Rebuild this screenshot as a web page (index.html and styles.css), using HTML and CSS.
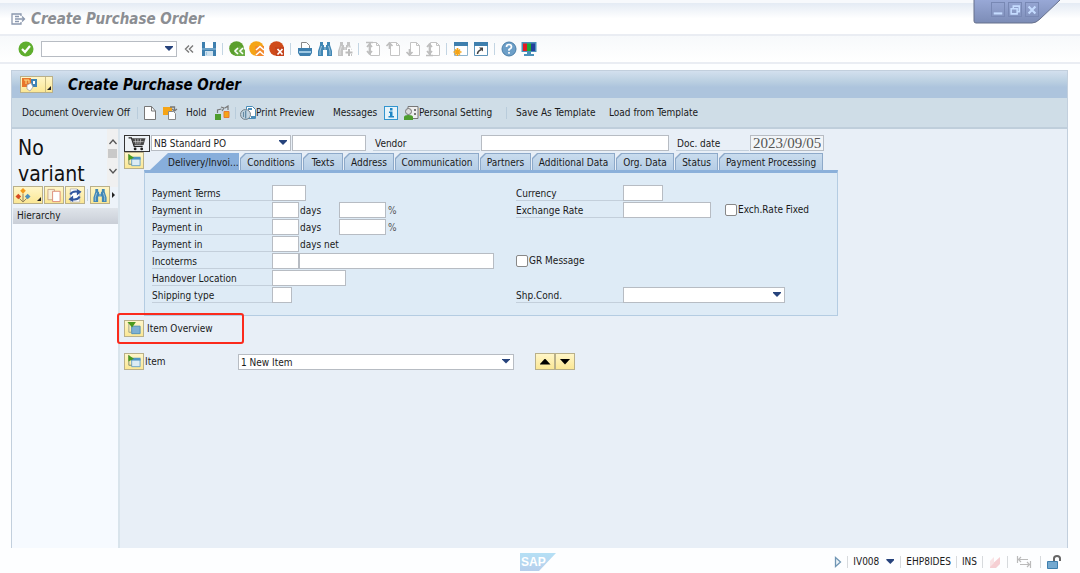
FILE: index.html
```html
<!DOCTYPE html>
<html lang="en">
<head>
<meta charset="utf-8">
<title>Create Purchase Order</title>
<link rel="stylesheet" href="styles.css">
</head>
<body>
<svg class="defs" aria-hidden="true">
  <symbol id="binoculars" viewBox="0 0 16 16"><path d="M3 1h3v3h1v2h2V4h1V1h3v3l2 6v5h-5V9H6v6H1v-5l2-6z" fill="currentColor"/><path d="M4.500 5 3 10v4M11.500 5 13 10v4M8 5v4" stroke="#fff" stroke-opacity=".5" fill="none"/></symbol>
  <symbol id="expand" viewBox="0 0 16 16"><path d="M5.500 5.500h9v8h-9z" fill="#dcecf5" stroke="#6aa3c8"/><path d="M5 4h10v3H5z" fill="#4f95c4"/><path d="M2.500 1v11h3" fill="none" stroke="#7d8d72"/><path d="m2 1 6 4-6 3z" fill="#4b9a1d"/></symbol>
  <symbol id="page" viewBox="0 0 16 16"><path d="M5.500 1.500h6l3 3v10h-9z" fill="#fff" stroke="#c4c4c4"/><path d="M11.500 1.500v3h3" fill="none" stroke="#c4c4c4"/></symbol>
</svg>

<header class="titlebar">
  <svg class="icon" viewBox="0 0 16 16"><path d="M11 5V3H2v10h9v-2M5 5.500h4M5 10.500h4M5 8h9M12 5.500 14.500 8 12 10.500" fill="none" stroke="#8b98ae" stroke-width="1.300"/></svg>
  <h1 class="titlebar-text">Create Purchase Order</h1>
  <div class="window-tab">
    <svg class="window-tab-shape" viewBox="0 0 90 24"><defs><linearGradient id="tabfill" x1="0" y1="0" x2="0" y2="1"><stop offset="0" stop-color="#98a8d6"/><stop offset="1" stop-color="#7c8cb6"/></linearGradient></defs><path d="M1 0h86L67 19q-4 4-8 4H3q-2 0-2-2z" fill="url(#tabfill)"/><path d="M1 0v21q0 2 2 2h56q4 0 8-4L87 0" fill="none" stroke="#66708c"/></svg>
    <div class="window-buttons">
      <button class="window-button" aria-label="Minimize"><svg viewBox="0 0 14 14"><path d="M2 11h10" stroke="#c5dcff" stroke-width="2.500"/></svg></button>
      <button class="window-button" aria-label="Restore"><svg viewBox="0 0 14 14"><path d="M5 5V2.500h7V9H9.500M2.500 5.500h7v6h-7z" fill="none" stroke="#c5dcff" stroke-width="1.800"/></svg></button>
      <button class="window-button" aria-label="Close"><svg viewBox="0 0 14 14"><path d="m3 3 8 8M11 3l-8 8" stroke="#c5dcff" stroke-width="2.500"/></svg></button>
    </div>
  </div>
</header>

<nav class="toolbar" aria-label="Standard toolbar">
  <button class="tool" aria-label="Enter"><svg viewBox="0 0 16 16"><circle cx="8" cy="8" r="7.500" fill="#5fae2e"/><path d="m4 8 3 3 5-6" fill="none" stroke="#fff" stroke-width="2.200"/></svg></button>
  <span class="combo command"><input class="field" type="text" aria-label="Command"></span>
  <button class="tool" aria-label="Hide command field"><svg viewBox="0 0 16 16"><path d="M8 4.500 4.500 8 8 11.500M12 4.500 8.500 8l3.500 3.500" fill="none" stroke="#7a7a7a" stroke-width="1.400"/></svg></button>
  <button class="tool" aria-label="Save"><svg viewBox="0 0 16 16"><path d="M1 1h14v14H1z" fill="#3e7fae"/><path d="M4 1h8v6H4z" fill="#fff"/><path d="M4 10h8v5H4z" fill="#cfe2ef"/><path d="M5.500 11v3M1 8h14" stroke="#9cc4de"/></svg></button>
  <span class="sep"></span>
  <button class="tool" aria-label="Back"><svg viewBox="0 0 16 16"><circle cx="7.500" cy="7.500" r="7.300" fill="#5a9e2c"/><path d="M6 15 5 8l6-3 5 4v6z" fill="#6cad45"/><path d="M9 7 6 10l3 3M14 7l-3 3 3 3" fill="none" stroke="#fff" stroke-width="1.600"/></svg></button>
  <button class="tool" aria-label="Exit"><svg viewBox="0 0 16 16"><circle cx="7.500" cy="7.500" r="7.300" fill="#f5a416"/><path d="M6 5h9v10H7z" fill="#f28a2e"/><path d="m7 9 4-3.500L15 9M7 14l4-3.500 4 3.500" fill="none" stroke="#fff" stroke-width="1.600"/></svg></button>
  <button class="tool" aria-label="Cancel"><svg viewBox="0 0 16 16"><circle cx="7.500" cy="7.500" r="7.300" fill="#cf4a19"/><path d="M6 6h9v9H7z" fill="#c4421c"/><path d="m8.500 8 5 5.500M13.500 8l-5 5.500" stroke="#fff" stroke-width="1.700"/></svg></button>
  <span class="sep"></span>
  <button class="tool" aria-label="Print"><svg viewBox="0 0 16 16"><path d="M4.500 7V1.500h5l3 3V7" fill="#fff" stroke="#888"/><path d="M1 7h14v5l-2 3H3l-2-3z" fill="#3e7fae"/><path d="M2 11h12" stroke="#bfe0f4" stroke-width="1.500"/></svg></button>
  <button class="tool find" aria-label="Find"><svg><use href="#binoculars"/></svg></button>
  <button class="tool find-off" aria-label="Find next"><svg viewBox="0 0 16 16"><use href="#binoculars"/><path d="M12 6.500v9M7.500 11h8.500" stroke="#fff" stroke-width="4"/><path d="M12 8v7M8.500 11.500h7" stroke="#bcbcbc" stroke-width="2"/></svg></button>
  <span class="sep"></span>
  <button class="tool" aria-label="First page"><svg viewBox="0 0 16 16"><use href="#page"/><path d="M1 1.500h7M4.500 3v10M2 6l2.500-3L7 6M2 10l2.500 3L7 10" fill="none" stroke="#bebebe" stroke-width="1.700"/></svg></button>
  <button class="tool" aria-label="Previous page"><svg viewBox="0 0 16 16"><use href="#page"/><path d="M4.500 1v7M1.500 5l3-3 3 3" fill="none" stroke="#bebebe" stroke-width="1.700"/></svg></button>
  <button class="tool" aria-label="Next page"><svg viewBox="0 0 16 16"><use href="#page"/><path d="M4.500 8v7M1.500 11l3 3 3-3" fill="none" stroke="#bebebe" stroke-width="1.700"/></svg></button>
  <button class="tool" aria-label="Last page"><svg viewBox="0 0 16 16"><use href="#page"/><path d="M1 14.500h7M4.500 3v10M2 6l2.500-3L7 6M2 10l2.500 3L7 10" fill="none" stroke="#bebebe" stroke-width="1.700"/></svg></button>
  <span class="sep"></span>
  <button class="tool" aria-label="New session"><svg viewBox="0 0 16 16"><path d="M1.500 1.500h13v13h-13z" fill="#fff" stroke="#8db4ce"/><path d="M1 1h14v4H1z" fill="#3e7fae"/><path d="M4.500 7v8M.5 11h8M2 8.500l5 5M7 8.500l-5 5" stroke="#f5a416" stroke-width="1.700"/></svg></button>
  <button class="tool" aria-label="Create shortcut"><svg viewBox="0 0 16 16"><path d="M1.500 1.500h13v13h-13z" fill="#fff" stroke="#5c93b8"/><path d="M1 1h14v4H1z" fill="#3e7fae"/><path d="M4.500 13q0-3 4-4.500" fill="none" stroke="#444" stroke-width="1.500"/><path d="M6 6.500h4v4z" fill="#444"/></svg></button>
  <span class="sep"></span>
  <button class="tool" aria-label="Help"><svg viewBox="0 0 16 16"><circle cx="8" cy="8" r="7" fill="#6d9fc8" stroke="#4a7ea8"/><path d="M5.500 6q0-2.500 2.500-2.500T10.500 6Q10.500 7.200 8 8.500v1.200M8 11v1.800" fill="none" stroke="#fff" stroke-width="1.700"/></svg></button>
  <button class="tool" aria-label="Customize layout"><svg viewBox="0 0 16 16"><path d="M.5 1h15v10H.5zM6 11h4v2h3v2H3v-2h3z" fill="#4b91bb"/><path d="M2 2.500h4V10H2z" fill="#e31b23"/><path d="M6 2.500h4V10H6z" fill="#1faa35"/><path d="M10 2.500h4V10h-4z" fill="#243f9c"/></svg></button>
</nav>

<main class="window">
  <div class="window-head">
    <button class="yellow services" aria-label="Object services"><svg viewBox="0 0 18 15"><path d="M1 1h9v9H1z" fill="#e8762c"/><path d="M3 3h2v4M5 3h3v3" fill="none" stroke="#fbe08a"/><path d="M10 2h6v8h-6z" fill="#3f83b5"/><path d="M12 4h2v3h-2z" fill="#fff"/><path d="m6 8 4-2 2 4-3 4-3-2z" fill="#fff" stroke="#999" stroke-width=".7"/></svg><span class="divider"></span><span class="corner"></span></button>
    <h2 class="window-title">Create Purchase Order</h2>
  </div>

  <div class="app-toolbar">
    <button class="action doc-overview">Document Overview Off</button>
    <span class="sep"></span>
    <button class="action new" aria-label="Create"><svg class="icon" viewBox="0 0 16 16"><path d="M2.500 1.500h7L13.500 6v8.500h-11z" fill="#fff" stroke="#777"/><path d="M9.500 1.500V6h4" fill="none" stroke="#777"/></svg></button>
    <button class="action other" aria-label="Other purchase order"><svg class="icon" viewBox="0 0 16 16"><path d="M1 2h9v8H1z" fill="#f5a416"/><path d="M6.500 6.500h5l2 2v6h-7z" fill="#fff" stroke="#888"/><path d="M8 2h4.500v4M10 4l2.500 2L15 4" fill="none" stroke="#777" stroke-width="1.300"/></svg></button>
    <button class="action hold">Hold</button>
    <button class="action check" aria-label="Check"><svg class="icon" viewBox="0 0 16 16"><path d="M1 9h6v6H1z" fill="#4e9d2d"/><path d="M10 6.500h5v6h-5z" fill="#f5a416" stroke="#e67a30"/><path d="M3.500 8V5l4-1M7 2l3 1-2 3M11 3l3-2v4" fill="none" stroke="#777" stroke-width="1.200"/></svg></button>
    <span class="sep"></span>
    <button class="action preview"><svg class="icon" viewBox="0 0 16 16"><path d="M6.500 1.500h6l3 3v9h-9z" fill="#fff" stroke="#4a8db8"/><path d="M8 4h4M11 12h4" stroke="#4a8db8" stroke-width="2"/><circle cx="5.500" cy="9.500" r="5" fill="#b5cbd8" fill-opacity=".8" stroke="#78848c"/><path d="M5.500 5.500v8M3.500 7v5" stroke="#668ba3"/></svg>Print Preview</button>
    <button class="action messages">Messages</button>
    <button class="action info" aria-label="Information"><svg class="icon" viewBox="0 0 16 16"><path d="M1 1h14v14H1z" fill="#3295cf"/><path d="M2 2h12v12H2z" fill="#e6f3fa"/><path d="M7 3h2.500v2.500H7zM6 6.500h3.500V11H11v1.500H5.500V11H7V8H6z" fill="#2186c4"/></svg></button>
    <button class="action personal"><svg class="icon" viewBox="0 0 16 16"><path d="M5 1.500h10v12H5z" fill="#eee" stroke="#777"/><path d="M11 4h2v2h-2zM11 8h2v2h-2z" fill="#777"/><circle cx="5.500" cy="6.500" r="3" fill="#ddd" stroke="#777"/><path d="M1 15v-3q0-2 4.500-2t4.500 2v3z" fill="#4e9d2d"/></svg>Personal Setting</button>
    <span class="sep"></span>
    <button class="action save-template">Save As Template</button>
    <button class="action load-template">Load from Template</button>
  </div>

  <div class="workspace">
    <aside class="side">
      <div class="variant">
        <p class="variant-text">No variant</p>
        <div class="scroll" aria-hidden="true">
          <svg viewBox="0 0 10 8"><path d="M1.500 6 5 2l3.500 4" fill="none" stroke="#555" stroke-width="1.300"/></svg>
          <span class="thumb"></span>
          <svg viewBox="0 0 10 8"><path d="M1.500 2 5 6l3.500-4" fill="none" stroke="#555" stroke-width="1.300"/></svg>
        </div>
      </div>
      <div class="side-tools">
        <button class="yellow wide" aria-label="Selection variant"><svg viewBox="0 0 16 16"><path d="M8 6v8M4 11l4 4 4-4" fill="none" stroke="#8a7a58"/><path d="M8 0 11 3 8 6 5 3z" fill="#f49a1c"/><path d="M3 6 6 9l-3 3-3-3z" fill="#d84a20"/><path d="m13 6 3 3-3 3-3-3z" fill="#4d90bd"/></svg><span class="corner"></span></button>
        <button class="yellow" aria-label="Copy"><svg viewBox="0 0 16 16"><path d="M1.500 1.500h7v11h-7z" fill="#f7f0dc" stroke="#c7a58c"/><path d="M6.500 3.500h8v11h-8z" fill="#fff" stroke="#dc8a75"/></svg></button>
        <button class="yellow" aria-label="Refresh"><svg viewBox="0 0 16 16"><path d="M3 1h7l3 3v11H3z" fill="#fff" stroke="#bbb"/><path d="M3 7q2-4 8-3M13 9q-2 4-8 3" fill="none" stroke="#31569f" stroke-width="2.200"/><path d="m10 1 5 3-5 4zM6 8l-5 4 5 3z" fill="#31569f"/></svg></button>
        <span class="sep"></span>
        <button class="yellow find" aria-label="Find"><svg><use href="#binoculars"/></svg></button>
        <span class="more"></span>
      </div>
      <h3 class="side-head">Hierarchy</h3>
      <div class="tree"></div>
    </aside>

    <section class="content">
      <div class="order-row">
        <button class="cart" aria-label="Order type"><svg viewBox="0 0 20 16"><path d="M1 2h3l3 9h9" fill="none" stroke="#222" stroke-width="1.300"/><path d="M4 2.500h15L17 9.500H7z" fill="#444"/><path d="M8 3l1 6M11 3v6M14 3l-1 6M6 6h11" stroke="#ddd" stroke-width=".7"/><circle cx="8" cy="13.800" r="1.500" fill="#222"/><circle cx="15" cy="13.800" r="1.500" fill="#222"/></svg></button>
        <span class="combo order-type"><select class="field" aria-label="Order type"><option>NB Standard PO</option></select></span>
        <input class="field order-number" type="text" aria-label="Order number">
        <label class="label vendor-label" for="vendor">Vendor</label>
        <input class="field vendor" id="vendor" type="text">
        <label class="label date-label" for="date">Doc. date</label>
        <input class="field date" id="date" type="text" value="2023/09/05">
      </div>

      <div class="header-data">
        <button class="yellow" aria-label="Collapse header"><svg><use href="#expand"/></svg></button>
        <div class="tab-area">
          <div class="tabs" role="tablist">
            <button class="tab active" role="tab" aria-selected="true"><span>Delivery/Invoi...</span></button>
            <button class="tab t62" role="tab"><span>Conditions</span></button>
            <button class="tab t40" role="tab"><span>Texts</span></button>
            <button class="tab t50" role="tab"><span>Address</span></button>
            <button class="tab t84" role="tab"><span>Communication</span></button>
            <button class="tab t51" role="tab"><span>Partners</span></button>
            <button class="tab t83" role="tab"><span>Additional Data</span></button>
            <button class="tab t58" role="tab"><span>Org. Data</span></button>
            <button class="tab t43" role="tab"><span>Status</span></button>
            <button class="tab t104" role="tab"><span>Payment Processing</span></button>
          </div>
          <div class="panel" role="tabpanel">
            <div class="form">
              <div class="row"><label class="label" for="terms">Payment Terms</label><input class="field w34" id="terms" type="text"></div>
              <div class="row"><label class="label" for="days1">Payment in</label><input class="field w27" id="days1" type="text"><span class="unit">days</span><input class="field w47" type="text" aria-label="Discount 1"><span class="percent">%</span></div>
              <div class="row"><label class="label" for="days2">Payment in</label><input class="field w27" id="days2" type="text"><span class="unit">days</span><input class="field w47" type="text" aria-label="Discount 2"><span class="percent">%</span></div>
              <div class="row"><label class="label" for="days3">Payment in</label><input class="field w27" id="days3" type="text"><span class="unit">days net</span></div>
              <div class="row"><label class="label" for="inco">Incoterms</label><input class="field w27" id="inco" type="text"><input class="field w195" type="text" aria-label="Incoterms location"></div>
              <div class="row"><label class="label" for="handover">Handover Location</label><input class="field w74" id="handover" type="text"></div>
              <div class="row"><label class="label" for="shipping">Shipping type</label><input class="field w20" id="shipping" type="text"></div>
            </div>
            <div class="form form-right">
              <div class="row"><label class="label" for="currency">Currency</label><input class="field w40" id="currency" type="text"></div>
              <div class="row"><label class="label" for="rate">Exchange Rate</label><input class="field w88" id="rate" type="text"><label class="check-label rate-fixed"><input class="box" type="checkbox">Exch.Rate Fixed</label></div>
              <div class="row row-gap"><label class="check-label"><input class="box" type="checkbox">GR Message</label></div>
              <div class="row row-last"><label class="label" for="shpcond">Shp.Cond.</label><span class="combo w162"><select class="field" id="shpcond"><option></option></select></span></div>
            </div>
          </div>
        </div>
      </div>

      <div class="overview">
        <button class="yellow" aria-label="Expand items"><svg viewBox="0 0 16 16"><path d="M5.500 5.500h9v8h-9z" fill="#7eb0d4" stroke="#4f8fba"/><path d="M2.500 2v10h3" fill="none" stroke="#9ba18c"/><path d="M1 1h9L6 7z" fill="#4b9a1d"/></svg></button>
        <span>Item Overview</span>
      </div>

      <div class="item-row">
        <button class="yellow" aria-label="Expand item detail"><svg><use href="#expand"/></svg></button>
        <label class="item-label" for="item">Item</label>
        <span class="combo item-select"><select class="field" id="item"><option>1 New Item</option></select></span>
        <button class="yellow" aria-label="Previous item"><span class="up"></span></button>
        <button class="yellow" aria-label="Next item"><span class="down"></span></button>
      </div>
    </section>
  </div>
</main>

<footer class="status">
  <span></span>
  <svg class="logo" viewBox="0 0 36 18" role="img" aria-label="SAP"><defs><linearGradient id="logofill" x1="0" y1="0" x2="0" y2="1"><stop offset="0" stop-color="#b5e0f5"/><stop offset="1" stop-color="#b7cfec"/></linearGradient></defs><path d="M0 0h36L19 18H0z" fill="url(#logofill)"/><text class="logo-text" x="1" y="13">SAP</text></svg>
  <div class="status-items">
    <svg class="play" viewBox="0 0 8 12"><path d="M1.500 1.500 6.500 6l-5 4.500z" fill="#eef5fa" stroke="#7096b4" stroke-width="1.300"/></svg>
    <span class="sep"></span>
    <button class="action system">IV008<span class="arrow"></span></button>
    <span class="sep"></span>
    <span>EHP8IDES</span>
    <span class="sep"></span>
    <span>INS</span>
    <span class="sep"></span>
    <svg class="signal" viewBox="0 0 12 12"><path d="M1 10 11 1v7l-4 4H1z" fill="#f6cfd3"/><path d="M1 5 5 1v6l-4 4z" fill="#f9e4e6"/></svg>
    <span class="sep"></span>
    <svg class="transfer" viewBox="0 0 16 12"><path d="M1.500 0v7M2 3.500h10M5 1 2.500 3.500 5 6M14.500 5v7M14 8.500H4M11 6l2.500 2.500L11 11" fill="none" stroke="#bbb" stroke-width="1.200"/></svg>
    <span class="sep"></span>
    <svg class="icon" viewBox="0 0 16 16"><path d="M8 8V4.500Q8 2 11 2t3 2.500V7" fill="none" stroke="#666" stroke-width="2"/><path d="M1.500 7.500h10v7h-10z" fill="#74a9d0" stroke="#3e7fae"/></svg>
  </div>
</footer>
</body>
</html>
```
FILE: styles.css
```css
* { box-sizing: border-box; }

body {
  margin: 0;
  min-height: 100vh;
  display: flex;
  flex-direction: column;
  background: #fdfeff;
  color: #1a1a1a;
  font: 10px/16px "DejaVu Sans Condensed", "Noto Sans", sans-serif;
}

button, input, select { font: inherit; color: inherit; margin: 0; }
button { padding: 0; border: 0; background: none; flex: none; white-space: nowrap; }
svg { display: block; flex: none; }
h1, h2, h3, p { margin: 0; }

.defs { position: absolute; width: 0; height: 0; }
.icon { width: 16px; height: 16px; }
.sep { flex: none; width: 1px; height: 12px; background: #c3d5e3; }

/* Title bar */
.titlebar {
  position: relative;
  display: flex;
  align-items: center;
  gap: 5px;
  height: 36px;
  padding: 0 10px;
  border-top: 3px solid #f7f9fc;
  border-bottom: 2px solid #eaedf3;
  background: linear-gradient(#e4ebf4, #fff 50%);
}
.titlebar-text { font: italic bold 15px/20px "DejaVu Sans Condensed", "Noto Sans", sans-serif; color: #8b8e93; }
.titlebar .icon { margin-top: 1px; }
.window-tab { position: absolute; top: -3px; right: 17px; width: 90px; height: 24px; }
.window-tab-shape { width: 90px; height: 24px; }
.window-buttons { position: absolute; top: 2px; left: 18px; display: flex; gap: 3px; }
.window-button { width: 14px; height: 15px; border: 1px solid #7888b4; }

/* Standard toolbar */
.toolbar {
  display: flex;
  align-items: center;
  gap: 4px;
  height: 28px;
  padding: 0 18px;
  border-bottom: 2px solid #eaedf3;
  background: linear-gradient(#f7f9fb, #fff);
}
.toolbar .sep { margin: 0 2px 0 1px; }
.tool, .tool svg { width: 16px; height: 16px; }
.find { color: #4187b5; }
.find-off { color: #c4c4c4; }
.command { width: 136px; margin: 0 0 0 3px; }

/* Fields */
.field {
  flex: none;
  height: 16px;
  padding: 1px 2px 0;
  border: 1px solid #b7bcc3;
  border-radius: 0;
  background: #fff;
  line-height: 13px;
  appearance: none;
}
.combo { position: relative; flex: none; display: flex; }
.combo .field { width: 100%; }
.combo::after, .arrow {
  content: "";
  width: 8px;
  height: 5px;
  background: #26437c;
  clip-path: polygon(0 0, 100% 0, 100% 20%, 50% 100%, 0 20%);
}
.combo::after { position: absolute; right: 4px; top: 5px; pointer-events: none; }
.label { flex: none; height: 16px; border-bottom: 1px solid #c3cfdb; line-height: 18px; }

.yellow {
  display: flex;
  align-items: center;
  justify-content: center;
  width: 20px;
  height: 17px;
  border: 1px solid #b9b08a;
  background: linear-gradient(#fff6c8, #fbe795);
}
.yellow svg { width: 16px; height: 15px; }
.corner { width: 4px; height: 4px; background: #222; clip-path: polygon(100% 0, 100% 100%, 0 100%); align-self: flex-end; margin: 0 0 2px; }

/* Main window */
.window {
  flex: 1;
  display: flex;
  flex-direction: column;
  margin: 6px 12px 0 11px;
  border: 1px solid #c2cfdd;
  border-bottom: 0;
  background: #e8eff7;
}
.window-head {
  display: flex;
  align-items: center;
  gap: 15px;
  height: 27px;
  padding: 0 8px;
  background: linear-gradient(#d3e0ee, #bacfe1 40%, #adc4dd 60%);
}
.services { width: 33px; justify-content: space-between; padding: 0 1px 0 0; }
.services svg { width: 18px; }
.divider { width: 1px; height: 15px; margin-left: 4px; background: #c9bb83; }
.window-title { font: italic bold 15px/20px "DejaVu Sans Condensed", "Noto Sans", sans-serif; color: #000; }

.app-toolbar {
  display: flex;
  align-items: center;
  height: 31px;
  padding: 1px 10px 0;
  border-bottom: 2px solid #bfcedb;
  background: #cfdde7;
}
.app-toolbar .sep { background: #b9ccdb; }
.action { display: flex; align-items: center; }
.doc-overview { width: 115px; }
.new { width: 20px; margin-left: 4px; }
.other { width: 24px; }
.hold { width: 28px; }
.check { width: 21px; }
.preview { width: 93px; margin-left: 4px; }
.messages { width: 50px; }
.info { width: 20px; }
.personal { width: 103px; }
.save-template { width: 93px; margin-left: 9px; }

.workspace { flex: 1; display: flex; }

/* Hierarchy side panel */
.side { flex: none; display: flex; flex-direction: column; width: 108px; border-right: 2px solid #d9e4ec; background: #edf3f9; }
.variant { display: flex; justify-content: space-between; height: 58px; }
.variant-text { width: 94px; padding: 6px 0 0 6px; font-size: 21px; line-height: 26px; color: #111; }
.scroll { display: flex; flex-direction: column; align-items: center; gap: 3px; width: 11px; padding-top: 9px; background: #f0f0f0; }
.scroll svg { width: 10px; height: 8px; }
.scroll svg:last-child { margin-top: 6px; }
.thumb { width: 9px; height: 9px; background: #c9c9c9; }
.side-tools { display: flex; align-items: flex-start; gap: 1px; height: 18px; margin-top: -1px; padding-left: 1px; }
.side-tools .yellow { height: 18px; }
.side-tools .sep { margin: 3px 1px 0; }
.side-tools .wide { width: 30px; justify-content: space-between; padding: 0 1px; }
.more { width: 3px; height: 6px; margin: 6px 0 0 1px; background: #222; clip-path: polygon(0 0, 100% 50%, 0 100%); }
.side-head { height: 16px; margin: 4px 0 0 1px; padding-left: 4px; background: linear-gradient(#dfe4ea, #c9ced7); font-size: 10px; font-weight: normal; }
.tree { flex: 1; background: #f6faff; }

/* Content */
.content { flex: 1; min-width: 0; padding: 6px 0 0 4px; }
.order-row { display: flex; gap: 1px; }
.cart { display: flex; align-items: center; justify-content: center; width: 26px; height: 17px; border: 1px solid #333; background: #eef2f6; }
.cart svg { width: 20px; height: 15px; }
.order-type { width: 140px; }
.order-number { width: 74px; }
.vendor-label { width: 107px; margin-left: 6px; padding-left: 2px; }
.vendor { width: 188px; }
.date-label { width: 73px; margin-left: 6px; padding-left: 1px; }
.date { width: 74px; padding: 0 2px; background: #f2f5f8; color: #555; font: 15px/14px "Liberation Serif", serif; }

.header-data { display: flex; }
.tab-area { flex: none; width: 694px; margin-top: 1px; }
.tabs { display: flex; gap: 1px; height: 17px; }
.tab {
  height: 17px;
  background: #8da9c9;
  clip-path: polygon(5px 0, 100% 0, 100% 100%, 0 100%, 0 5px);
  padding: 1px 1px 0;
}
.tab span {
  display: block;
  height: 16px;
  line-height: 17px;
  background: linear-gradient(#c9dcee, #b5cde6);
  clip-path: polygon(5px 0, 100% 0, 100% 100%, 0 100%, 0 5px);
  text-align: center;
}
.tab.active { width: 95px; background: #87aedb; clip-path: polygon(24px 0, 100% 0, 100% 100%, 6px 100%); }
.tab.active span { padding-left: 23px; text-align: left; clip-path: none; background: none; }
.t62 { width: 62px; }
.t40 { width: 40px; }
.t50 { width: 50px; }
.t84 { width: 84px; }
.t51 { width: 51px; }
.t83 { width: 83px; }
.t58 { width: 58px; }
.t43 { width: 43px; }
.t104 { width: 104px; }
.panel {
  display: flex;
  padding: 12px 6px 12px 7px;
  border: 1px solid #b4cce2;
  border-top: 3px solid #8bb0da;
  background: #deebf6;
}
.form { flex: none; width: 364px; display: flex; flex-direction: column; gap: 1px; }
.form-right { width: 316px; }
.row { display: flex; height: 16px; line-height: 18px; }
.form .label { width: 120px; }
.form-right .label { width: 107px; }
.unit { width: 40px; padding-left: 1px; white-space: nowrap; }
.percent { padding-left: 2px; color: #555; }
.row-gap { margin-top: 34px; }
.row-last { margin-top: 17px; }
.check-label { display: flex; align-items: center; }
.rate-fixed { margin-left: 14px; }
.box { appearance: none; width: 12px; height: 12px; margin-right: 1px; border: 1px solid #888; border-radius: 2px; background: #fff; }
.w20 { width: 20px; }
.w27 { width: 27px; }
.w34 { width: 34px; }
.w40 { width: 40px; }
.w47 { width: 47px; }
.w74 { width: 74px; }
.w88 { width: 88px; }
.w162 { width: 162px; }
.w195 { width: 195px; }

.overview {
  display: flex;
  align-items: center;
  gap: 3px;
  width: 127px;
  height: 31px;
  margin: -3px 0 0 -7px;
  padding-left: 5px;
  position: relative;
  border: 2px solid #fb2a1c;
  border-radius: 3px;
}
.item-row { display: flex; align-items: center; margin-top: 9px; }
.item-label { width: 94px; padding-left: 1px; }
.item-select { width: 276px; margin-right: 21px; }
.up, .down { width: 11px; height: 6px; background: #000; }
.up { clip-path: polygon(50% 0, 100% 100%, 0 100%); }
.down { clip-path: polygon(0 0, 100% 0, 50% 100%); }

/* Status bar */
.status {
  display: grid;
  grid-template-columns: 1fr auto 1fr;
  align-items: center;
  height: 25px;
  padding: 2px 18px 0 14px;
}
.logo { width: 36px; height: 18px; }
.logo-text { font: bold 12px "Liberation Sans", sans-serif; fill: #fff; }
.status-items { display: flex; align-items: center; justify-content: flex-end; gap: 5px; }
.status-items .sep { background: #d7dadd; }
.play { width: 8px; height: 12px; }
.system { gap: 7px; margin-right: 1px; }
.signal { width: 12px; height: 12px; margin: 0 1px; }
.transfer { width: 16px; height: 12px; margin: 0 3px; }
```
